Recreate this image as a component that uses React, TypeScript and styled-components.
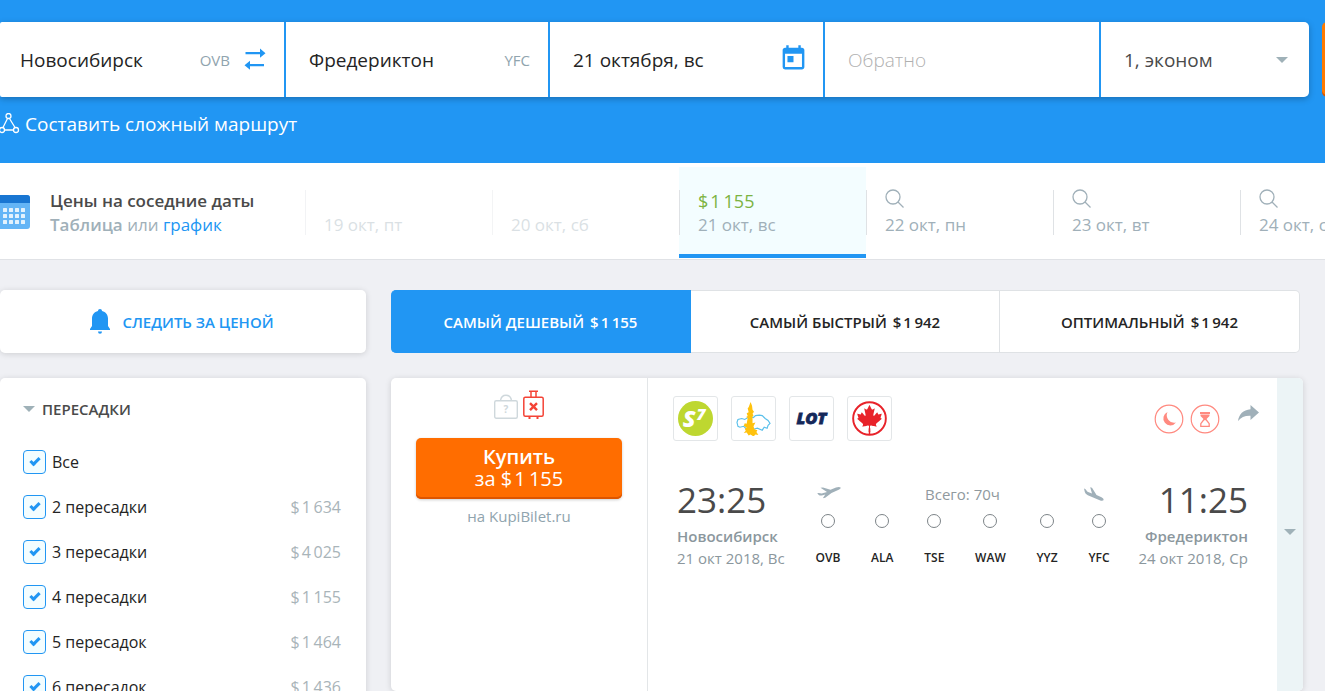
import React, { useState } from 'react';
import styled, { createGlobalStyle, css } from 'styled-components';
import { FaCanadianMapleLeaf } from 'react-icons/fa';
import { MdToday } from 'react-icons/md';

const blue = '#2196f3';
const grey = '#a0b0b9';

const GlobalStyle = createGlobalStyle`
  *, *::before { box-sizing: border-box; }
  body {
    margin: 0;
    background: #eff0f4;
    color: #242424;
    font-family: 'Open Sans', 'Noto Sans', sans-serif;
    font-size: 16px;
  }
  button, input, select { font: inherit; color: inherit; }
  button { border: 0; padding: 0; background: none; cursor: pointer; }
  a { color: inherit; text-decoration: none; }
  svg { display: block; flex: none; }
`;

const Page = styled.div`
  display: flex;
  flex-direction: column;
  height: 100vh;
  overflow: hidden;
`;

/* ---------- search header ---------- */

const Header = styled.header`
  flex: none;
  height: 163px;
  padding-top: 22px;
  background: ${blue};
  overflow: hidden;
`;

const SearchForm = styled.form`
  display: flex;
  gap: 13px;
  height: 75px;
  padding-right: 3px;
`;

const Fields = styled.div`
  flex: 1;
  min-width: 0;
  display: grid;
  grid-template-columns: 284fr 262fr 273fr 274fr 208fr;
  gap: 2px;
  border-radius: 2px 5px 5px 2px;
  box-shadow: 0 2px 6px rgba(0, 0, 0, 0.25);
  background: ${blue};
  overflow: hidden;
`;

const Field = styled.label<{ $left?: number; $right?: number }>`
  display: flex;
  align-items: center;
  min-width: 0;
  background: #fff;
  padding: 0 ${p => p.$right ?? 18}px 0 ${p => p.$left ?? 23}px;
`;

const inputText = css`
  flex: 1;
  min-width: 0;
  height: 40px;
  border: 0;
  padding: 0;
  outline: 0;
  background: transparent;
  font-size: 19px;
`;

const FieldInput = styled.input`
  ${inputText}
  &::placeholder { color: #b0b0b0; opacity: 1; font-weight: 300; }
`;

const FieldSelect = styled.select`
  ${inputText}
  appearance: none;
  color: #4a4a4a;
`;

const Code = styled.span`
  color: #90a4ae;
  font-size: 15px;
`;

const SwapButton = styled.button`
  margin: 0 0 2px 14px;
`;

const CalendarMark = styled(MdToday)`
  margin-bottom: 2px;
`;

const SubmitButton = styled.button`
  flex: none;
  width: 180px;
  height: 73px;
  margin-right: -180px;
  border-radius: 5px;
  background: #ff7a00;
  box-shadow: 0 2px 0 #d95500;
  color: #fff;
`;

const RouteLink = styled.a`
  display: inline-flex;
  align-items: center;
  gap: 5px;
  height: 54px;
  color: #fff;
  font-size: 19px;
`;

/* ---------- neighbouring dates ---------- */

const DatesBar = styled.nav`
  flex: none;
  display: flex;
  height: 97px;
  padding-top: 4px;
  background: #fff;
  border-bottom: 1px solid #e0e2e6;
  overflow: hidden;
`;

const DatesIntro = styled.div`
  flex: none;
  display: flex;
  gap: 20px;
  width: 305px;
  padding-top: 22px;
`;

const CalendarIcon = styled.svg`
  margin-top: 6px;
`;

const DatesTitle = styled.div`
  color: #4a4a4a;
  font-size: 17px;
  font-weight: 600;
  line-height: 24px;
`;

const DatesModes = styled.div`
  color: ${grey};
  font-size: 17px;
  line-height: 24px;
  b { font-weight: 600; }
  a { color: ${blue}; }
`;

const DateCell = styled.button<{ $active?: boolean; $dim?: boolean }>`
  position: relative;
  flex: none;
  width: 187px;
  height: 91px;
  padding: 22px 0 0 19px;
  text-align: left;
  color: ${grey};
  font-size: 17px;
  line-height: 24px;
  display: flex;
  flex-direction: column;
  justify-content: flex-start;
  background: ${p => (p.$active ? '#f3fdff' : 'transparent')};
  border-bottom: 4px solid ${p => (p.$active ? blue : 'transparent')};
  opacity: ${p => (p.$dim ? 0.38 : 1)};
  &::before {
    content: '';
    position: absolute;
    left: 0;
    top: 23px;
    height: 45px;
    width: 1px;
    background: #dfe2e5;
  }
`;

const DateTop = styled.span`
  height: 24px;
  color: #7cb342;
  font-size: 18px;
`;

/* ---------- content ---------- */

const Content = styled.main`
  flex: 1;
  min-height: 0;
  display: flex;
  gap: 25px;
  padding: 30px 22px 0 0;
`;

const Sidebar = styled.aside`
  flex: 0 0 366px;
  display: flex;
  flex-direction: column;
  gap: 25px;
`;

const panel = css`
  background: #fff;
  border-radius: 5px;
  box-shadow: 0 1px 6px rgba(0, 0, 0, 0.14);
`;

const WatchButton = styled.button`
  ${panel}
  flex: none;
  display: flex;
  align-items: center;
  justify-content: center;
  gap: 12px;
  height: 63px;
  padding-right: 2px;
  color: ${blue};
  font-size: 15px;
  font-weight: 600;
`;

const FilterPanel = styled.section`
  ${panel}
  flex: none;
  padding: 15px 25px 24px 23px;
`;

const FilterHeading = styled.button`
  display: flex;
  align-items: center;
  gap: 7px;
  height: 32px;
  margin-bottom: 14px;
  color: #4a4a4a;
  font-size: 15px;
  font-weight: 600;
`;

const FilterRow = styled.label`
  display: flex;
  align-items: center;
  height: 45px;
  gap: 6px;
`;

const CheckBox = styled.input`
  appearance: none;
  flex: none;
  width: 23px;
  height: 24px;
  margin: 0;
  border: 1px solid ${blue};
  border-radius: 4px;
  background: #f3fdff;
  display: grid;
  place-items: center;
  &:checked::before {
    content: '';
    width: 10px;
    height: 6px;
    border: solid ${blue};
    border-width: 0 0 3px 3px;
    transform: rotate(-45deg) translate(1px, -1px);
  }
`;

const FilterPrice = styled.span`
  margin-left: auto;
  color: #a9b4b9;
`;

const Results = styled.div`
  flex: 1;
  min-width: 0;
  display: flex;
  flex-direction: column;
  gap: 25px;
`;

const Tabs = styled.div`
  flex: none;
  display: grid;
  grid-template-columns: 300fr 309fr 300fr;
  height: 63px;
  margin-right: 3px;
`;

const Tab = styled.button<{ $active?: boolean }>`
  border: 1px solid #dfe2e5;
  border-left-width: 0;
  background: #fff;
  font-size: 15px;
  font-weight: 600;
  &:first-child { border-radius: 5px 0 0 5px; }
  &:last-child { border-radius: 0 5px 5px 0; }
  ${p => p.$active && css`
    background: ${blue};
    border-color: ${blue};
    color: #fff;
  `}
`;

const TabPrice = styled.span`
  margin-left: 6px;
`;

const Ticket = styled.article`
  ${panel}
  flex: 1;
  display: flex;
  overflow: hidden;
`;

const BuyColumn = styled.div`
  flex: none;
  width: 257px;
  padding: 12px 25px 0;
  border-right: 1px solid #e3e6e8;
  display: flex;
  flex-direction: column;
  align-items: center;
`;

const Baggage = styled.div`
  display: flex;
  align-items: flex-end;
  gap: 5px;
  height: 30px;
`;

const BuyButton = styled.button`
  width: 100%;
  height: 61px;
  margin-top: 18px;
  padding-bottom: 2px;
  border-radius: 5px;
  background: #ff6d00;
  box-shadow: inset 0 -2px 0 #dd5500, 0 1px 3px rgba(0, 0, 0, 0.2);
  color: #fff;
  font-size: 20px;
  line-height: 22px;
  b { display: block; font-weight: 600; }
`;

const Agency = styled.a`
  margin-top: 6px;
  color: #90a4ae;
  font-size: 15px;
  line-height: 22px;
`;

const Flight = styled.div`
  flex: 1;
  min-width: 0;
  padding: 18px 18px 0 25px;
`;

const FlightTop = styled.div`
  display: flex;
  gap: 13px;
  height: 45px;
`;

const Logo = styled.div`
  display: grid;
  place-items: center;
  width: 45px;
  height: 45px;
  border: 1px solid #e3e6e8;
  border-radius: 3px;
`;

const FlightActions = styled.div`
  margin-left: auto;
  display: flex;
  align-items: center;
  gap: 6px;
`;

const ShareButton = styled.button`
  margin: 0 0 12px 12px;
`;

const FlightInfo = styled.div`
  display: flex;
  justify-content: space-between;
  margin-top: 33px;
  padding: 0 11px 0 4px;
`;

const Endpoint = styled.div<{ $right?: boolean }>`
  flex: 1;
  text-align: ${p => (p.$right ? 'right' : 'left')};
  color: #8b979d;
  font-size: 15px;
  line-height: 22px;
  white-space: nowrap;
`;

const Time = styled.div`
  color: #4a4a4a;
  font-size: 35px;
  line-height: 51px;
`;

const City = styled.div`
  font-weight: 600;
`;

const Route = styled.div`
  flex: none;
  width: 294px;
  padding-top: 8px;
`;

const RouteTop = styled.div`
  display: flex;
  align-items: center;
  justify-content: space-between;
  height: 24px;
  padding: 0 5px 0 1px;
  color: #90999e;
  font-size: 15px;
  line-height: 24px;
`;

const Stops = styled.ol`
  display: flex;
  justify-content: space-between;
  list-style: none;
  margin: 8px 0 0;
  padding: 0;
`;

const Stop = styled.li`
  display: flex;
  flex-direction: column;
  align-items: center;
  gap: 21px;
  font-size: 12px;
  font-weight: 600;
  line-height: 18px;
  &::before {
    content: '';
    width: 14px;
    height: 14px;
    border: 1px solid #7d8488;
    border-radius: 50%;
  }
`;

const ExpandButton = styled.button`
  flex: none;
  width: 26px;
  padding-bottom: 6px;
  display: grid;
  place-items: center;
  background: #ecf4f6;
`;

const CurrencySign = styled.span`
  margin-right: 2px;
`;

const Price = ({ value }: { value: string }) => (
  <>
    <CurrencySign>$</CurrencySign>
    {value.replace(' ', '\u2009')}
  </>
);

const Triangle = () => (
  <svg width="12" height="6" viewBox="0 0 12 6">
    <path d="M0 0h12L6 6z" fill="#9fb1b8" />
  </svg>
);

const Magnifier = () => (
  <svg width="20" height="20" viewBox="0 0 20 20" fill="none" stroke={grey} strokeWidth="1.3">
    <circle cx="8" cy="8" r="7" />
    <path d="M13 13l5.500 5.500" />
  </svg>
);

const dates = [
  { day: '19 окт, пт', dim: true },
  { day: '20 окт, сб', dim: true },
  { day: '21 окт, вс', price: '1 155' },
  { day: '22 окт, пн' },
  { day: '23 окт, вт' },
  { day: '24 окт, ср' },
];

const transfers = [
  { name: 'Все' },
  { name: '2 пересадки', price: '1 634' },
  { name: '3 пересадки', price: '4 025' },
  { name: '4 пересадки', price: '1 155' },
  { name: '5 пересадок', price: '1 464' },
  { name: '6 пересадок', price: '1 436' },
];

const tabs = [
  { name: 'САМЫЙ ДЕШЕВЫЙ', price: '1 155' },
  { name: 'САМЫЙ БЫСТРЫЙ', price: '1 942' },
  { name: 'ОПТИМАЛЬНЫЙ', price: '1 942' },
];

const stops = ['OVB', 'ALA', 'TSE', 'WAW', 'YYZ', 'YFC'];

export default function App() {
  const [tab, setTab] = useState(0);

  return (
    <Page>
      <GlobalStyle />
      <Header>
        <SearchForm onSubmit={e => e.preventDefault()}>
          <Fields>
            <Field $left={20}>
              <FieldInput aria-label="Откуда" defaultValue="Новосибирск" />
              <Code>OVB</Code>
              <SwapButton type="button" aria-label="Поменять местами">
                <svg width="22" height="22" viewBox="0 0 22 22" fill={blue}>
                  <path d="M1.500 4H16V.5l5.500 4.800-5.500 4.500V6.300H1.500z" />
                  <path d="M20 16H6v-3.300L.5 17.300 6 21.800v-3.500h14z" />
                </svg>
              </SwapButton>
            </Field>
            <Field>
              <FieldInput aria-label="Куда" defaultValue="Фредериктон" />
              <Code>YFC</Code>
            </Field>
            <Field $right={15}>
              <FieldInput aria-label="Туда" defaultValue="21 октября, вс" />
              <CalendarMark size={29} color={blue} />
            </Field>
            <Field>
              <FieldInput aria-label="Обратно" placeholder="Обратно" />
            </Field>
            <Field $right={21}>
              <FieldSelect aria-label="Пассажиры и класс">
                <option>1, эконом</option>
              </FieldSelect>
              <Triangle />
            </Field>
          </Fields>
          <SubmitButton type="submit" aria-label="Найти билеты" />
        </SearchForm>
        <RouteLink href="#route">
          <svg width="20" height="22" viewBox="0 0 20 22" fill="none" stroke="#fff" strokeWidth="1.300">
            <circle cx="8.500" cy="3" r="2.500" />
            <circle cx="2" cy="17" r="2.500" />
            <circle cx="16" cy="17" r="2.500" />
            <path d="M7.500 5.500L3 14.500M9.500 5.500L15 14.500M4.500 17h9" />
          </svg>
          Составить сложный маршрут
        </RouteLink>
      </Header>

      <DatesBar>
        <DatesIntro>
          <CalendarIcon width="30" height="34" viewBox="0 0 30 34">
            <rect x="-4" width="34" height="34" rx="3" fill="#64b5f6" />
            <path d="M0 0h27a3 3 0 0 1 3 3v5H0z" fill="#1976d2" />
            {[13, 19, 25].map(y =>
              [3, 9, 15, 21].map(x => (
                <rect key={`${x}-${y}`} x={x} y={y} width="4" height="4" rx="0.500" fill="#e3f2fd" />
              )),
            )}
          </CalendarIcon>
          <div>
            <DatesTitle>Цены на соседние даты</DatesTitle>
            <DatesModes>
              <b>Таблица</b> или <a href="#chart">график</a>
            </DatesModes>
          </div>
        </DatesIntro>
        {dates.map(d => (
          <DateCell key={d.day} $active={!!d.price} $dim={d.dim}>
            <DateTop>
              {d.price ? <Price value={d.price} /> : !d.dim && <Magnifier />}
            </DateTop>
            <span>{d.day}</span>
          </DateCell>
        ))}
      </DatesBar>

      <Content>
        <Sidebar>
          <WatchButton>
            <svg width="20" height="25" viewBox="0 0 20 25" fill={blue}>
              <path d="M10 0c1.200 0 2 .8 2 2 3.800.9 6 4 6 7.500V17l2 3v1H0v-1l2-3V9.500C2 6 4.200 2.900 8 2c0-1.200.8-2 2-2z" />
              <path d="M8 22.500h4a2 2.200 0 0 1-4 0z" />
            </svg>
            СЛЕДИТЬ ЗА ЦЕНОЙ
          </WatchButton>
          <FilterPanel>
            <FilterHeading>
              <Triangle />
              ПЕРЕСАДКИ
            </FilterHeading>
            {transfers.map(t => (
              <FilterRow key={t.name}>
                <CheckBox type="checkbox" defaultChecked />
                {t.name}
                {t.price && (
                  <FilterPrice>
                    <Price value={t.price} />
                  </FilterPrice>
                )}
              </FilterRow>
            ))}
          </FilterPanel>
        </Sidebar>

        <Results>
          <Tabs>
            {tabs.map((t, i) => (
              <Tab key={t.name} $active={i === tab} onClick={() => setTab(i)}>
                {t.name}
                <TabPrice>
                  <Price value={t.price} />
                </TabPrice>
              </Tab>
            ))}
          </Tabs>

          <Ticket>
            <BuyColumn>
              <Baggage>
                <svg width="24" height="26" viewBox="0 0 24 26" fill="none" stroke="#cfd8dc" strokeWidth="1.400">
                  <rect x="0.700" y="6.700" width="22.600" height="17.600" rx="1.500" />
                  <path d="M6.500 6.500C7 3 9 1.200 12 1.200S17 3 17.500 6.500" />
                  <text x="12" y="18.500" textAnchor="middle" fontSize="10" fontWeight="700" fill="#cfd8dc" stroke="none">?</text>
                </svg>
                <svg width="21" height="30" viewBox="0 0 21 30" fill="none" stroke="#f44336" strokeWidth="1.500">
                  <rect x="0.800" y="7.300" width="19.400" height="18.900" rx="1.500" />
                  <path d="M8 7V2M13 7V2M6 1.200h9" />
                  <path d="M6.500 27v2M14.500 27v2" strokeWidth="2" />
                  <path d="M7 13.200l7 7M14 13.200l-7 7" strokeWidth="2.400" />
                </svg>
              </Baggage>
              <BuyButton>
                <b>Купить</b>
                за <Price value="1 155" />
              </BuyButton>
              <Agency href="#kupibilet">на KupiBilet.ru</Agency>
            </BuyColumn>

            <Flight>
              <FlightTop>
                <Logo>
                  <svg width="35" height="35" viewBox="0 0 36 36">
                    <circle cx="18" cy="18" r="18" fill="#bed730" />
                    <g fill="#fff" fontFamily="Open Sans" fontWeight="800" fontStyle="italic">
                      <text x="5" y="27" fontSize="24">S</text>
                      <text x="19" y="20" fontSize="16">7</text>
                    </g>
                  </svg>
                </Logo>
                <Logo>
                  <svg width="35" height="35" viewBox="0 0 36 36" fill="none">
                    <path
                      d="M1 22l1-3 4-1 3 1 5-3 4 1 2-2 4-.5 3 .5 3 3 3 2 2 3-2 2-1 3-3-1-2 3-5-2-4 1-3-2-4 2-3-3-4 1-2-1z"
                      stroke="#5bc0eb"
                      strokeWidth="1.200"
                    />
                    <path
                      d="M15 1l1.500 4 .5 4 1.500 2-1.500 2 1 2-1 1v7l3-1-2 4 1 3 3 1-1 2 2 3-3-.5-2 2-3-2-2 1-2-3-3 .5 2-2.500-1-2 2-1-3-2 1-2.500 2 .5 1-6-1.500-1 1.500-1-1-3 2-1-1-4 1-1z"
                      fill="#ffc20e"
                    />
                  </svg>
                </Logo>
                <Logo>
                  <svg width="35" height="35" viewBox="0 0 36 36">
                    <g fill="#14285a" fontFamily="Open Sans" fontWeight="800" fontStyle="italic">
                      <text x="18" y="24" fontSize="17" textAnchor="middle" stroke="#14285a" strokeWidth="0.800">LOT</text>
                    </g>
                  </svg>
                </Logo>
                <Logo>
                  <svg width="35" height="35" viewBox="0 0 36 36">
                    <circle cx="18" cy="18" r="16.800" fill="none" stroke="#e8232a" strokeWidth="2" />
                    <FaCanadianMapleLeaf x="4" y="4" size={28} color="#e8232a" />
                    <path d="M18 28v7" stroke="#e8232a" strokeWidth="1.500" />
                  </svg>
                </Logo>
                <FlightActions>
                  <svg width="30" height="30" viewBox="0 0 30 30">
                    <circle cx="15" cy="15" r="13.800" fill="none" stroke="#ff8a80" strokeWidth="1.200" />
                    <path d="M13.500 8a7 7 0 1 0 8.500 10.500A7.500 7.500 0 0 1 13.500 8z" fill="#ff8a80" />
                  </svg>
                  <svg width="30" height="30" viewBox="0 0 30 30">
                    <circle cx="15" cy="15" r="13.800" fill="none" stroke="#ff8a80" strokeWidth="1.200" />
                    <path d="M10 8h10v2H10zM10.500 10.500h9V12L16 15.500h-2L10.500 12z" fill="#ff8a80" />
                    <path d="M10.800 22.400h8.400v-2.700L16 15.500h-2l-3.200 4.200z" fill="none" stroke="#ff8a80" strokeWidth="1.300" />
                  </svg>
                  <ShareButton aria-label="Поделиться">
                    <svg width="21" height="16" viewBox="0 0 21 16">
                      <path d="M12.500 0L21 7.500 12.500 15v-4.300C7 10.500 3 12 0 16 1 9.500 5 4.800 12.500 4.300z" fill={grey} />
                    </svg>
                  </ShareButton>
                </FlightActions>
              </FlightTop>

              <FlightInfo>
                <Endpoint>
                  <Time>23:25</Time>
                  <City>Новосибирск</City>
                  21 окт 2018, Вс
                </Endpoint>
                <Route>
                  <RouteTop>
                    <svg width="24" height="16" viewBox="0 0 24 16" fill={grey}>
                      <path d="M3.500 1.800L6 1.400l7.500 2.400L19 1.600Q22 .7 23.700 1.500q.3 1.200-2 2.200l-7.200 3.200-6.300 4.800-2.400.6L8.300 8.500l-3.500 1q-2 .4-3-.6L.2 7.300l1.500-.3 3 .5 5.300-1.600z" />
                    </svg>
                    Всего: 70ч
                    <svg width="20" height="15" viewBox="0 0 20 15" fill={grey}>
                      <path d="M0 1.500l1.300.6 2.200 2.600 4.500 1.800L6.200.2 8 .8l4.500 7.300 5 2.200q2.300 1.200 2.200 2.700-1 1.500-4 .3L3.800 8.200Q1.200 7 .8 5z" />
                    </svg>
                  </RouteTop>
                  <Stops>
                    {stops.map(s => (
                      <Stop key={s}>{s}</Stop>
                    ))}
                  </Stops>
                </Route>
                <Endpoint $right>
                  <Time>11:25</Time>
                  <City>Фредериктон</City>
                  24 окт 2018, Ср
                </Endpoint>
              </FlightInfo>
            </Flight>
            <ExpandButton aria-label="Подробнее">
              <Triangle />
            </ExpandButton>
          </Ticket>
        </Results>
      </Content>
    </Page>
  );
}
